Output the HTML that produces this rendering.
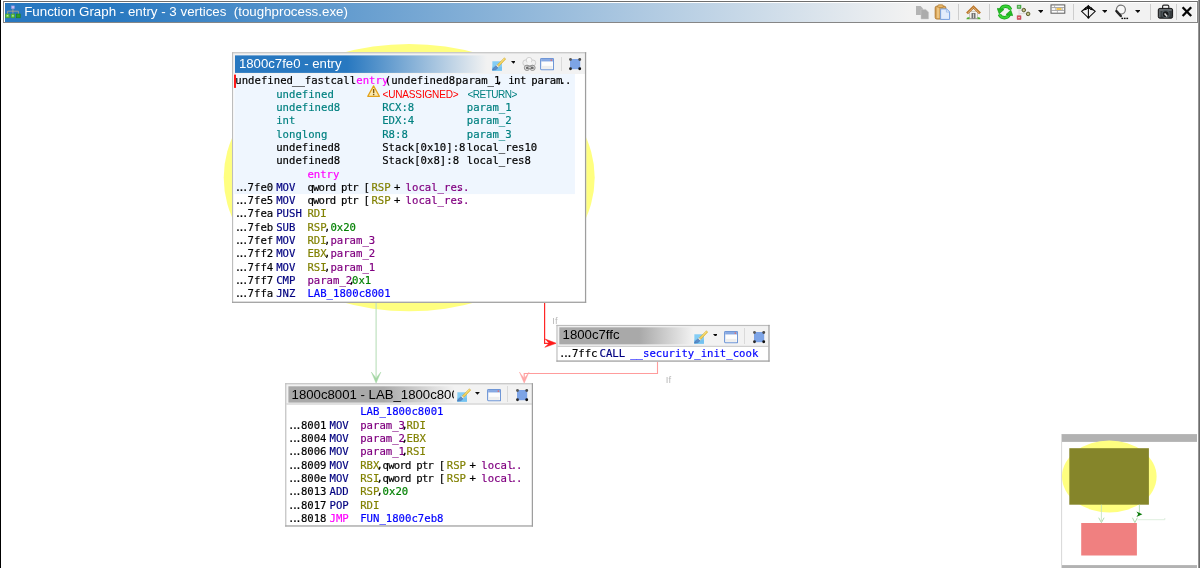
<!DOCTYPE html>
<html><head><meta charset="utf-8"><title>Function Graph</title>
<style>
html,body{margin:0;padding:0;background:#fff;}
body{will-change:transform;width:1200px;height:568px;position:relative;overflow:hidden;font-family:"Liberation Sans",sans-serif;}
.abs{position:absolute;}
.m{position:absolute;font-family:"DejaVu Sans Mono","Liberation Mono",monospace;font-size:10.65px;line-height:13.36px;white-space:pre;-webkit-text-stroke:0.18px currentColor;}
.s{position:absolute;font-family:"Liberation Sans",sans-serif;font-size:10.05px;line-height:12px;white-space:pre;letter-spacing:-0.2px;}
.k{color:#000}.nv{color:#000080}.ol{color:#808000}.pu{color:#800080}.gr{color:#008000}
.bl{color:#0000ff}.tl{color:#008080}.mg{color:#ff00ff}.rd{color:#ff0000}
#titlebar{left:3px;top:1px;width:1193px;height:20px;border:1px solid #868686;border-top-color:#6e6e6e;background:#fff;}
#tbbg{left:1px;top:1px;width:1191px;height:19px;background:#f2f2f2;}
#titlegrad{left:1px;top:1px;width:905px;height:19px;background:linear-gradient(to right,#2878c0 0,#2878c0 105px,#f2f2f2 905px);}
#titletext{left:20.2px;top:0;height:20px;line-height:20px;font-size:13.33px;color:#fff;white-space:pre;}
.blk{position:absolute;background:#fff;box-sizing:border-box;border-style:solid;border-width:1.2px;border-color:#c6c6c6 #9a9a9a #9a9a9a #c6c6c6;}
.hdr{position:absolute;background:#f2f2f2;}
.htitle{position:absolute;font-size:13.2px;white-space:pre;overflow:hidden;}
.lbl{position:absolute;font-size:9.5px;color:#bababa;line-height:10px;}
</style></head>
<body>
<!-- window side borders -->
<div class="abs" style="left:0;top:0;width:1px;height:568px;background:#000"></div>
<div class="abs" style="left:1198px;top:0;width:1px;height:568px;background:#969696"></div>
<div class="abs" style="left:1199px;top:0;width:1px;height:568px;background:#6c6c6c"></div>

<!-- main title bar -->
<div id="titlebar" class="abs">
  <div id="tbbg" class="abs"></div>
  <div id="titlegrad" class="abs"></div>
  <div id="titletext" class="abs">Function Graph - entry - 3 vertices  (toughprocess.exe)</div>
</div>
<svg class="abs" style="left:915px;top:4px" width="16" height="16" viewBox="0 0 16 16">
<path d="M1 2 H5.6 L8 4.4 V11 H1 Z" fill="#b4b4b4"/><path d="M6 5.4 H10.8 L13.6 8.2 V15 H6 Z" fill="#ababab" stroke="#c9c9c9" stroke-width="0.5"/></svg><svg class="abs" style="left:934px;top:4px" width="17" height="16" viewBox="0 0 17 16">
<rect x="1.2" y="2.2" width="10.6" height="12.8" rx="1.6" fill="#dca85c" stroke="#b07a30" stroke-width="1"/>
<rect x="3.8" y="0.8" width="5.4" height="2.8" rx="1" fill="#e8b86a" stroke="#b07a30" stroke-width="0.7"/>
<path d="M6.6 4.9 H12.6 L15.6 7.9 V15.4 H6.6 Z" fill="#e2ecfb" stroke="#77a0e0" stroke-width="1"/>
<path d="M12.4 5.1 V8.1 H15.4" fill="none" stroke="#8fb2e8" stroke-width="0.7"/><rect x="3.2" y="3.6" width="1.6" height="10.6" fill="#f0cc8c"/></svg><div class="abs" style="left:958px;top:4px;width:1px;height:16px;background:#cdcdcd"></div><svg class="abs" style="left:965px;top:4px" width="17" height="16" viewBox="0 0 17 16">
<rect x="4.6" y="7.6" width="7.8" height="6.6" fill="#f4f2ee" stroke="#b4b0a8" stroke-width="0.6"/>
<rect x="6.9" y="9.3" width="3.2" height="5.0" fill="#7a7a7a" stroke="#555" stroke-width="0.5"/>
<rect x="8.1" y="9.7" width="0.8" height="4.4" fill="#ddd"/>
<path d="M2.0 9.4 L8.5 3.0 L15.0 9.4" fill="none" stroke="#b8742a" stroke-width="2.6"/>
<path d="M2.6 9.2 L8.5 3.4 L14.4 9.2" fill="none" stroke="#e8b878" stroke-width="0.9"/>
<path d="M1.4 15.2 Q1.6 13.2 3.2 13.2 L4.6 13.2 V15.2 Z M15.6 15.2 Q15.4 13.2 13.8 13.2 L12.4 13.2 V15.2 Z" fill="#52ae34"/>
<rect x="4.4" y="14.4" width="8.2" height="0.8" fill="#8c8c8c"/></svg><div class="abs" style="left:989px;top:4px;width:1px;height:16px;background:#cdcdcd"></div><svg class="abs" style="left:996.5px;top:4.3px" width="16" height="16" viewBox="0 0 16 16">
<path d="M13.6 5.6 A5.4 5.4 0 0 0 3.6 5.6" fill="none" stroke="#109c14" stroke-width="3.3"/>
<path d="M13.6 5.6 A5.4 5.4 0 0 0 3.6 5.6" fill="none" stroke="#38d236" stroke-width="2.0"/>
<path d="M0.3 4.4 L7.0 5.4 L2.2 9.8 Z" fill="#24be24" stroke="#109c14" stroke-width="0.7"/>
<path d="M2.4 10.4 A5.4 5.4 0 0 0 12.4 10.4" fill="none" stroke="#109c14" stroke-width="3.3"/>
<path d="M2.4 10.4 A5.4 5.4 0 0 0 12.4 10.4" fill="none" stroke="#38d236" stroke-width="2.0"/>
<path d="M15.7 11.6 L9.0 10.6 L13.8 6.2 Z" fill="#24be24" stroke="#109c14" stroke-width="0.7"/></svg><svg class="abs" style="left:1016px;top:4px" width="16" height="17" viewBox="0 0 16 17">
<path d="M3 4.6 V12 M3 6.2 H6 M3 9.6 H10" stroke="#dcdcdc" stroke-width="1" fill="none"/>
<rect x="1.1" y="1.1" width="3.9" height="3.5" fill="#50b050" stroke="#3a9a3a" stroke-width="0.5"/>
<rect x="2" y="2.4" width="2" height="0.9" fill="#c8ecc8"/>
<rect x="1.1" y="11.8" width="3.9" height="3.7" fill="#d45060" stroke="#c04050" stroke-width="0.5"/>
<rect x="2" y="13.2" width="2" height="0.9" fill="#f4c8cc"/>
<circle cx="7.8" cy="6.1" r="1.8" fill="#a8a868" stroke="#55552a" stroke-width="0.9"/>
<circle cx="12.1" cy="9.9" r="1.8" fill="#a8a868" stroke="#55552a" stroke-width="0.9"/>
<circle cx="7.8" cy="6.1" r="0.7" fill="#e8e8c0"/><circle cx="12.1" cy="9.9" r="0.7" fill="#e8e8c0"/></svg><svg class="abs" style="left:1037.70px;top:10.00px" width="5.6" height="3.1" viewBox="0 0 5.6 3.1"><path d="M0 0 H5.6 L2.8 3.1 Z" fill="#0c0c0c"/></svg><svg class="abs" style="left:1049.5px;top:4.4px" width="16" height="10" viewBox="0 0 16 10">
<rect x="1.0" y="0.9" width="13.8" height="8.3" fill="#fcfcfc" stroke="#5c5c5c" stroke-width="1"/>
<path d="M1.4 3.6 H14.4 M1.4 6.4 H14.4" stroke="#8e8e8e" stroke-width="0.8" fill="none"/>
<path d="M4.6 1.2 V3.6 M7.4 6.4 V9 M12.2 3.6 V6.4 M5.8 3.6 V6.4" stroke="#a4a4a4" stroke-width="0.8" fill="none"/>
<rect x="6.6" y="4.2" width="4.8" height="1.6" fill="#f0b828"/></svg><div class="abs" style="left:1073px;top:4px;width:1px;height:16px;background:#cdcdcd"></div><svg class="abs" style="left:1080px;top:4px" width="17" height="16" viewBox="0 0 17 16">
<path d="M8.4 1.8 L15.2 7.4 L8.4 13.8 L1.6 7.4 Z" fill="none" stroke="#0a0a0a" stroke-width="1.05"/>
<path d="M8.4 3 V13" stroke="#0a0a0a" stroke-width="1.1"/>
<path d="M6.1 4.9 L8.4 0.7 L10.7 4.9 Z" fill="#0a0a0a"/>
<path d="M2.9 6.6 L5.6 2.9 L7.0 5.8 Z M13.9 6.6 L11.2 2.9 L9.8 5.8 Z" fill="#0a0a0a"/>
<circle cx="8.4" cy="13.5" r="1.15" fill="#0a0a0a"/></svg><svg class="abs" style="left:1101.80px;top:10.20px" width="5.6" height="3.0" viewBox="0 0 5.6 3.0"><path d="M0 0 H5.6 L2.8 3.0 Z" fill="#0c0c0c"/></svg><svg class="abs" style="left:1114px;top:4px" width="16" height="16" viewBox="0 0 16 16">
<circle cx="6.9" cy="5.6" r="4.5" fill="#f7f7f7" stroke="#757575" stroke-width="1.2"/>
<path d="M2.9 7.6 L6.8 12.0" stroke="#262626" stroke-width="2.4" stroke-linecap="round"/>
<circle cx="2.2" cy="6.9" r="1.0" fill="#1a1a1a"/>
<rect x="7.4" y="13.7" width="1.7" height="1.4" fill="#0c0c0c"/><rect x="9.9" y="13.7" width="1.7" height="1.4" fill="#0c0c0c"/><rect x="12.4" y="13.7" width="1.7" height="1.4" fill="#0c0c0c"/></svg><svg class="abs" style="left:1134.60px;top:10.20px" width="5.6" height="3.0" viewBox="0 0 5.6 3.0"><path d="M0 0 H5.6 L2.8 3.0 Z" fill="#0c0c0c"/></svg><div class="abs" style="left:1150px;top:4px;width:1px;height:16px;background:#cdcdcd"></div><svg class="abs" style="left:1157px;top:4px" width="17" height="16" viewBox="0 0 17 16">
<rect x="5.6" y="1.2" width="6.2" height="4" rx="1.3" fill="#f2f2f2" stroke="#2a2a2a" stroke-width="1.2"/>
<rect x="1.3" y="4.4" width="14.3" height="9.8" rx="1.5" fill="#363b3e" stroke="#161616" stroke-width="1"/>
<rect x="2.2" y="5.2" width="12.4" height="1.6" fill="#70777b"/>
<rect x="2.2" y="6.8" width="1.2" height="6.4" fill="#6a7074"/>
<circle cx="8.7" cy="10.2" r="3.5" fill="#1a1c1e" stroke="#4e585d" stroke-width="1.2"/>
<path d="M7.6 9.6 L10.2 12.6" stroke="#d8d8d8" stroke-width="1.5"/></svg><div class="abs" style="left:1176px;top:4px;width:1px;height:16px;background:#cdcdcd"></div><svg class="abs" style="left:1181px;top:6px" width="12" height="12" viewBox="0 0 12 12">
<path d="M1.6 1.3 L10.2 10.0 M10.2 1.3 L1.6 10.0" stroke="#050505" stroke-width="2.3" stroke-linecap="butt"/></svg><svg class="abs" style="left:5px;top:4px" width="16" height="16" viewBox="0 0 16 16">
<rect x="6.4" y="1.9" width="3" height="2.8" fill="#c4bdf4" stroke="#9a94e2" stroke-width="0.5"/>
<path d="M7.9 4.8 V7 M2.6 10 V7.2 H13.4 V10 M7.9 7 V10" stroke="#b8a488" stroke-width="0.8" fill="none"/>
<rect x="0.7" y="10" width="3.8" height="3.8" fill="#62c444" stroke="#3c9c26" stroke-width="0.6"/>
<rect x="6" y="10" width="3.8" height="3.8" fill="#62c444" stroke="#3c9c26" stroke-width="0.6"/>
<rect x="11.4" y="10" width="3.8" height="3.8" fill="#2ea028" stroke="#1d7d1a" stroke-width="0.6"/>
<rect x="1.8" y="11.2" width="1.4" height="1.2" fill="#c8f0b8"/><rect x="7.2" y="11.2" width="1.4" height="1.2" fill="#c8f0b8"/></svg>

<!-- graph edges + ellipse -->
<svg class="abs" style="left:0;top:0" width="1200" height="568" viewBox="0 0 1200 568">
  <ellipse cx="409.2" cy="177.6" rx="185.5" ry="133.7" fill="#ffff80"/>
  <!-- green fallthrough edge -->
  <path d="M376.1 303 V377" stroke="#bfe1bf" stroke-width="1.2" fill="none"/>
  <path d="M371.3 372.0 L376.1 383.2 L380.9 372.0 L376.1 378.0 Z" fill="#a4d6a4" stroke="#a4d6a4" stroke-width="0.4"/>
  <!-- red edge -->
  <path d="M544.6 303 V343.3 H549" stroke="#ff2626" stroke-width="1.2" fill="none"/>
  <path d="M545.2 339.0 L556.3 343.3 L544.8 347.3 L549.2 343.3 Z" fill="#ff1a1a" stroke="#ff1a1a" stroke-width="0.5"/>
  <!-- pink edge -->
  <path d="M657.5 361.7 V373.5 H524.2 V378" stroke="#ff9c9c" stroke-width="1.1" fill="none"/>
  <path d="M519.4 372.0 L524.2 383.2 L529.0 372.2 L524.2 378.6 Z" fill="#ffa6a6" stroke="#ffa0a0" stroke-width="0.4"/>
</svg>
<div class="lbl" style="left:552.3px;top:315.5px">If</div>
<div class="lbl" style="left:665.8px;top:375.3px">If</div>

<svg class="abs" style="left:0;top:0" width="1200" height="568" viewBox="0 0 1200 568">
<defs><linearGradient id="hg1" gradientUnits="userSpaceOnUse" x1="347.00" y1="0" x2="487.00" y2="0"><stop offset="0" stop-color="#2878c0"/><stop offset="1" stop-color="#f2f2f2"/></linearGradient></defs>
<rect x="232.00" y="52.20" width="354.20" height="250.70" fill="#ffffff"/>
<rect x="233.15" y="53.35" width="351.90" height="20.65" fill="#f2f2f2"/>
<rect x="235.00" y="55.40" width="252.00" height="17.50" fill="url(#hg1)"/>
<rect x="232.00" y="52.20" width="354.20" height="1.15" fill="#bdbdbd"/>
<rect x="232.00" y="52.20" width="1.15" height="250.70" fill="#bdbdbd"/>
<rect x="232.00" y="301.65" width="354.20" height="1.25" fill="#9e9e9e"/>
<rect x="584.95" y="52.20" width="1.25" height="250.70" fill="#9e9e9e"/>
</svg>
<div class="htitle" style="left:238.90px;top:56px;width:200.00px;height:16px;line-height:15px;color:#fff">1800c7fe0 - entry</div>
<svg class="abs" style="left:491.60px;top:56.60px" width="14.22" height="14.22" viewBox="0 0 16 16">
<rect x="0.4" y="4.8" width="10.8" height="10.6" fill="#84cdf5"/>
<rect x="0.4" y="11" width="10.8" height="4.4" fill="#74c2f0"/>
<path d="M14.0 0.9 L15.4 2.4 L7.6 10.6 L5.8 8.9 Z" fill="#f0cf5a" stroke="#d4a82c" stroke-width="0.6"/>
<path d="M13.4 1.9 L14.4 1.6 L7.4 9.0 Z" fill="#fdf0a8"/>
<path d="M5.6 8.8 L7.8 10.9 L6.6 12.0 L4.6 10.0 Z" fill="#ecebe0" stroke="#bdb8a0" stroke-width="0.4"/>
<path d="M4.4 10.0 L6.6 12.2 L4.4 14.2 L0.6 14.8 L0.9 13.2 Z" fill="#5c8cc8" stroke="#3f6eae" stroke-width="0.6"/>
</svg><svg class="abs" style="left:510.60px;top:61.40px" width="4.9" height="2.8" viewBox="0 0 4.9 2.8"><path d="M0 0 H4.9 L2.45 2.8 Z" fill="#0c0c0c"/></svg><svg class="abs" style="left:521.60px;top:56.60px" width="15.11" height="15.11" viewBox="0 0 17 17">
<circle cx="4.2" cy="6.6" r="3.3" fill="#f0f0f0" stroke="#c4c4c4" stroke-width="0.9"/>
<circle cx="12.2" cy="6.6" r="3.3" fill="#f0f0f0" stroke="#c4c4c4" stroke-width="0.9"/>
<circle cx="8.0" cy="3.6" r="3.2" fill="#f8f8f8" stroke="#c8c8c8" stroke-width="0.9"/>
<circle cx="8.2" cy="7.2" r="2.6" fill="#f4f4f4"/>
<circle cx="5.6" cy="12.2" r="3.0" fill="#dcdcdc" stroke="#8a8a8a" stroke-width="1.0"/>
<circle cx="11.8" cy="12.2" r="3.0" fill="#dcdcdc" stroke="#8a8a8a" stroke-width="1.0"/>
<rect x="4.6" y="11.2" width="8.4" height="2.2" fill="#6a6a6a"/>
<rect x="7.2" y="11.5" width="2.8" height="1.2" fill="#f4f4f4"/>
<rect x="5.2" y="9.4" width="7" height="1.4" fill="#9a9a9a"/>
</svg><svg class="abs" style="left:539.90px;top:56.60px" width="14.22" height="14.22" viewBox="0 0 16 16">
<rect x="0.7" y="1.7" width="14.6" height="12.6" rx="1" fill="#fdfdfd" stroke="#6f96d6" stroke-width="1.3"/>
<rect x="1.3" y="2.3" width="13.4" height="2.7" fill="#86a8e2"/>
<rect x="12.0" y="2.7" width="1.4" height="1.7" fill="#e66a6a"/>
<rect x="2" y="10" width="12" height="3.4" fill="#eeeeee"/>
</svg><div class="abs" style="left:561px;top:56.6px;width:1px;height:14px;background:#dadada"></div><svg class="abs" style="left:568.00px;top:56.70px" width="14.22" height="14.22" viewBox="0 0 16 16">
<rect x="2.7" y="2.7" width="10.6" height="10.6" fill="#7da4e6" stroke="#6a95e4" stroke-width="0.8"/>
<circle cx="2.8" cy="2.8" r="1.6" fill="#5a5a5a"/><circle cx="13.2" cy="2.8" r="1.6" fill="#4a4a4a"/>
<circle cx="2.8" cy="13.2" r="1.6" fill="#2a2a2a"/><circle cx="13.2" cy="13.2" r="1.6" fill="#111"/>
</svg><svg class="abs" style="left:0;top:0" width="1200" height="568" viewBox="0 0 1200 568"><rect x="234.4" y="74.0" width="340.5" height="120.1" fill="#eff6fe"/><rect x="234.1" y="74.6" width="1.8" height="13.3" fill="#ff0000"/></svg>
<svg class="abs" style="left:366.9px;top:85.4px" width="13.2" height="12.3" viewBox="0 0 14 13">
<path d="M7 0.9 L13.2 12 H0.8 Z" fill="#fbe9b0" stroke="#e3a21a" stroke-width="1.3" stroke-linejoin="round"/>
<rect x="6.3" y="4.2" width="1.5" height="4.3" fill="#7a5a10"/><rect x="6.3" y="9.3" width="1.5" height="1.5" fill="#7a5a10"/></svg>
<svg class="abs" style="left:0;top:0" width="1200" height="568" viewBox="0 0 1200 568">
<defs><linearGradient id="hg2" gradientUnits="userSpaceOnUse" x1="639.30" y1="0" x2="693.30" y2="0"><stop offset="0" stop-color="#a9a9a9"/><stop offset="1" stop-color="#f2f2f2"/></linearGradient></defs>
<rect x="556.40" y="324.90" width="213.20" height="36.80" fill="#ffffff"/>
<rect x="557.55" y="326.05" width="210.90" height="19.75" fill="#f2f2f2"/>
<rect x="559.30" y="327.30" width="134.00" height="17.10" fill="url(#hg2)"/>
<rect x="557.55" y="345.80" width="210.90" height="1.0" fill="#c4c4c4"/>
<rect x="556.40" y="324.90" width="213.20" height="1.15" fill="#bdbdbd"/>
<rect x="556.40" y="324.90" width="1.15" height="36.80" fill="#bdbdbd"/>
<rect x="556.40" y="360.45" width="213.20" height="1.25" fill="#9e9e9e"/>
<rect x="768.35" y="324.90" width="1.25" height="36.80" fill="#9e9e9e"/>
</svg>
<div class="htitle" style="left:562.60px;top:327px;width:120.00px;height:16px;line-height:15px;color:#000">1800c7ffc</div>
<svg class="abs" style="left:693.80px;top:329.70px" width="14.22" height="14.22" viewBox="0 0 16 16">
<rect x="0.4" y="4.8" width="10.8" height="10.6" fill="#84cdf5"/>
<rect x="0.4" y="11" width="10.8" height="4.4" fill="#74c2f0"/>
<path d="M14.0 0.9 L15.4 2.4 L7.6 10.6 L5.8 8.9 Z" fill="#f0cf5a" stroke="#d4a82c" stroke-width="0.6"/>
<path d="M13.4 1.9 L14.4 1.6 L7.4 9.0 Z" fill="#fdf0a8"/>
<path d="M5.6 8.8 L7.8 10.9 L6.6 12.0 L4.6 10.0 Z" fill="#ecebe0" stroke="#bdb8a0" stroke-width="0.4"/>
<path d="M4.4 10.0 L6.6 12.2 L4.4 14.2 L0.6 14.8 L0.9 13.2 Z" fill="#5c8cc8" stroke="#3f6eae" stroke-width="0.6"/>
</svg><svg class="abs" style="left:712.50px;top:333.60px" width="4.9" height="2.8" viewBox="0 0 4.9 2.8"><path d="M0 0 H4.9 L2.45 2.8 Z" fill="#0c0c0c"/></svg><svg class="abs" style="left:723.90px;top:329.70px" width="14.22" height="14.22" viewBox="0 0 16 16">
<rect x="0.7" y="1.7" width="14.6" height="12.6" rx="1" fill="#fdfdfd" stroke="#6f96d6" stroke-width="1.3"/>
<rect x="1.3" y="2.3" width="13.4" height="2.7" fill="#86a8e2"/>
<rect x="12.0" y="2.7" width="1.4" height="1.7" fill="#e66a6a"/>
<rect x="2" y="10" width="12" height="3.4" fill="#eeeeee"/>
</svg><div class="abs" style="left:744.3px;top:328.4px;width:1px;height:15.4px;background:#dadada"></div><svg class="abs" style="left:751.70px;top:329.80px" width="14.22" height="14.22" viewBox="0 0 16 16">
<rect x="2.7" y="2.7" width="10.6" height="10.6" fill="#7da4e6" stroke="#6a95e4" stroke-width="0.8"/>
<circle cx="2.8" cy="2.8" r="1.6" fill="#5a5a5a"/><circle cx="13.2" cy="2.8" r="1.6" fill="#4a4a4a"/>
<circle cx="2.8" cy="13.2" r="1.6" fill="#2a2a2a"/><circle cx="13.2" cy="13.2" r="1.6" fill="#111"/>
</svg><svg class="abs" style="left:0;top:0" width="1200" height="568" viewBox="0 0 1200 568">
<defs><linearGradient id="hg3" gradientUnits="userSpaceOnUse" x1="383.40" y1="0" x2="454.40" y2="0"><stop offset="0" stop-color="#a9a9a9"/><stop offset="1" stop-color="#f2f2f2"/></linearGradient></defs>
<rect x="285.20" y="383.20" width="247.80" height="143.40" fill="#ffffff"/>
<rect x="286.35" y="384.35" width="245.50" height="19.05" fill="#f2f2f2"/>
<rect x="288.40" y="386.30" width="166.00" height="16.30" fill="url(#hg3)"/>
<rect x="286.35" y="403.50" width="245.50" height="1.0" fill="#c4c4c4"/>
<rect x="285.20" y="383.20" width="247.80" height="1.15" fill="#bdbdbd"/>
<rect x="285.20" y="383.20" width="1.15" height="143.40" fill="#bdbdbd"/>
<rect x="285.20" y="525.35" width="247.80" height="1.25" fill="#9e9e9e"/>
<rect x="531.75" y="383.20" width="1.25" height="143.40" fill="#9e9e9e"/>
</svg>
<div class="htitle" style="left:291.60px;top:387px;width:162.40px;height:16px;line-height:15px;color:#000">1800c8001 - LAB_1800c8001</div>
<svg class="abs" style="left:456.90px;top:388.00px" width="14.22" height="14.22" viewBox="0 0 16 16">
<rect x="0.4" y="4.8" width="10.8" height="10.6" fill="#84cdf5"/>
<rect x="0.4" y="11" width="10.8" height="4.4" fill="#74c2f0"/>
<path d="M14.0 0.9 L15.4 2.4 L7.6 10.6 L5.8 8.9 Z" fill="#f0cf5a" stroke="#d4a82c" stroke-width="0.6"/>
<path d="M13.4 1.9 L14.4 1.6 L7.4 9.0 Z" fill="#fdf0a8"/>
<path d="M5.6 8.8 L7.8 10.9 L6.6 12.0 L4.6 10.0 Z" fill="#ecebe0" stroke="#bdb8a0" stroke-width="0.4"/>
<path d="M4.4 10.0 L6.6 12.2 L4.4 14.2 L0.6 14.8 L0.9 13.2 Z" fill="#5c8cc8" stroke="#3f6eae" stroke-width="0.6"/>
</svg><svg class="abs" style="left:475.00px;top:392.30px" width="4.9" height="2.8" viewBox="0 0 4.9 2.8"><path d="M0 0 H4.9 L2.45 2.8 Z" fill="#0c0c0c"/></svg><svg class="abs" style="left:486.90px;top:388.00px" width="14.22" height="14.22" viewBox="0 0 16 16">
<rect x="0.7" y="1.7" width="14.6" height="12.6" rx="1" fill="#fdfdfd" stroke="#6f96d6" stroke-width="1.3"/>
<rect x="1.3" y="2.3" width="13.4" height="2.7" fill="#86a8e2"/>
<rect x="12.0" y="2.7" width="1.4" height="1.7" fill="#e66a6a"/>
<rect x="2" y="10" width="12" height="3.4" fill="#eeeeee"/>
</svg><div class="abs" style="left:507.0px;top:386.3px;width:1px;height:15.4px;background:#dadada"></div><svg class="abs" style="left:515.20px;top:388.10px" width="14.22" height="14.22" viewBox="0 0 16 16">
<rect x="2.7" y="2.7" width="10.6" height="10.6" fill="#7da4e6" stroke="#6a95e4" stroke-width="0.8"/>
<circle cx="2.8" cy="2.8" r="1.6" fill="#5a5a5a"/><circle cx="13.2" cy="2.8" r="1.6" fill="#4a4a4a"/>
<circle cx="2.8" cy="13.2" r="1.6" fill="#2a2a2a"/><circle cx="13.2" cy="13.2" r="1.6" fill="#111"/>
</svg>

<span class="m k" style="left:235.30px;top:74.00px;">undefined</span>
<span class="m k" style="left:292.00px;top:74.00px;">__fastcall</span>
<span class="m mg" style="left:356.30px;top:74.00px;">entry</span>
<span class="m k" style="left:384.80px;top:74.00px;">(</span>
<span class="m k" style="left:391.20px;top:74.00px;">undefined8</span>
<span class="m k" style="left:455.60px;top:74.00px;">param_1</span>
<span class="m k" style="left:496.20px;top:74.00px;">,</span>
<span class="m k" style="left:508.20px;top:74.00px;letter-spacing:-0.50px;">int</span>
<span class="m k" style="left:531.20px;top:74.00px;letter-spacing:-0.20px;">param</span>
<span class="m k" style="left:559.60px;top:74.00px;">.</span>
<span class="m k" style="left:565.00px;top:74.00px;">.</span>
<span class="m tl" style="left:276.20px;top:88.00px;">undefined</span>
<span class="s rd" style="left:382.6px;top:89px">&lt;UNASSIGNED&gt;</span>
<span class="s tl" style="left:467.4px;top:89px;letter-spacing:-0.5px">&lt;RETURN&gt;</span>
<span class="m tl" style="left:276.20px;top:101.00px;">undefined8</span>
<span class="m tl" style="left:382.20px;top:101.00px;">RCX:8</span>
<span class="m tl" style="left:466.80px;top:101.00px;">param_1</span>
<span class="m tl" style="left:276.20px;top:114.00px;">int</span>
<span class="m tl" style="left:382.20px;top:114.00px;">EDX:4</span>
<span class="m tl" style="left:466.80px;top:114.00px;">param_2</span>
<span class="m tl" style="left:276.20px;top:128.00px;">longlong</span>
<span class="m tl" style="left:382.20px;top:128.00px;">R8:8</span>
<span class="m tl" style="left:466.80px;top:128.00px;">param_3</span>
<span class="m k" style="left:276.20px;top:141.00px;">undefined8</span>
<span class="m k" style="left:382.20px;top:141.00px;">Stack[0x10]:8</span>
<span class="m k" style="left:466.80px;top:141.00px;">local_res10</span>
<span class="m k" style="left:276.20px;top:154.00px;">undefined8</span>
<span class="m k" style="left:382.20px;top:154.00px;">Stack[0x8]:8</span>
<span class="m k" style="left:466.80px;top:154.00px;">local_res8</span>
<span class="m mg" style="left:307.40px;top:168.00px;">entry</span>
<span class="m k" style="left:234.70px;top:181.00px;letter-spacing:-2.75px;">...</span>
<span class="m k" style="left:247.60px;top:181.00px;">7fe0</span>
<span class="m nv" style="left:276.20px;top:181.00px;">MOV</span>
<span class="m k" style="left:307.40px;top:181.00px;letter-spacing:-0.79px;">qword ptr [</span>
<span class="m ol" style="left:371.40px;top:181.00px;">RSP</span>
<span class="m k" style="left:393.90px;top:181.00px;">+</span>
<span class="m pu" style="left:405.60px;top:181.00px;">local_res</span>
<span class="m pu" style="left:456.60px;top:181.00px;">..</span>
<span class="m k" style="left:234.70px;top:194.00px;letter-spacing:-2.75px;">...</span>
<span class="m k" style="left:247.60px;top:194.00px;">7fe5</span>
<span class="m nv" style="left:276.20px;top:194.00px;">MOV</span>
<span class="m k" style="left:307.40px;top:194.00px;letter-spacing:-0.79px;">qword ptr [</span>
<span class="m ol" style="left:371.40px;top:194.00px;">RSP</span>
<span class="m k" style="left:393.90px;top:194.00px;">+</span>
<span class="m pu" style="left:405.60px;top:194.00px;">local_res</span>
<span class="m pu" style="left:456.60px;top:194.00px;">..</span>
<span class="m k" style="left:234.70px;top:207.00px;letter-spacing:-2.75px;">...</span>
<span class="m k" style="left:247.60px;top:207.00px;">7fea</span>
<span class="m nv" style="left:276.20px;top:207.00px;">PUSH</span>
<span class="m ol" style="left:307.40px;top:207.00px;">RDI</span>
<span class="m k" style="left:234.70px;top:221.00px;letter-spacing:-2.75px;">...</span>
<span class="m k" style="left:247.60px;top:221.00px;">7feb</span>
<span class="m nv" style="left:276.20px;top:221.00px;">SUB</span>
<span class="m ol" style="left:307.40px;top:221.00px;">RSP</span>
<span class="m k" style="left:324.10px;top:221.00px;">,</span>
<span class="m gr" style="left:330.40px;top:221.00px;">0x20</span>
<span class="m k" style="left:234.70px;top:234.00px;letter-spacing:-2.75px;">...</span>
<span class="m k" style="left:247.60px;top:234.00px;">7fef</span>
<span class="m nv" style="left:276.20px;top:234.00px;">MOV</span>
<span class="m ol" style="left:307.40px;top:234.00px;">RDI</span>
<span class="m k" style="left:324.10px;top:234.00px;">,</span>
<span class="m pu" style="left:330.40px;top:234.00px;">param_3</span>
<span class="m k" style="left:234.70px;top:247.00px;letter-spacing:-2.75px;">...</span>
<span class="m k" style="left:247.60px;top:247.00px;">7ff2</span>
<span class="m nv" style="left:276.20px;top:247.00px;">MOV</span>
<span class="m ol" style="left:307.40px;top:247.00px;">EBX</span>
<span class="m k" style="left:324.10px;top:247.00px;">,</span>
<span class="m pu" style="left:330.40px;top:247.00px;">param_2</span>
<span class="m k" style="left:234.70px;top:261.00px;letter-spacing:-2.75px;">...</span>
<span class="m k" style="left:247.60px;top:261.00px;">7ff4</span>
<span class="m nv" style="left:276.20px;top:261.00px;">MOV</span>
<span class="m ol" style="left:307.40px;top:261.00px;">RSI</span>
<span class="m k" style="left:324.10px;top:261.00px;">,</span>
<span class="m pu" style="left:330.40px;top:261.00px;">param_1</span>
<span class="m k" style="left:234.70px;top:274.00px;letter-spacing:-2.75px;">...</span>
<span class="m k" style="left:247.60px;top:274.00px;">7ff7</span>
<span class="m nv" style="left:276.20px;top:274.00px;">CMP</span>
<span class="m pu" style="left:307.40px;top:274.00px;">param_2</span>
<span class="m k" style="left:348.50px;top:274.00px;">,</span>
<span class="m gr" style="left:352.00px;top:274.00px;">0x1</span>
<span class="m k" style="left:234.70px;top:287.00px;letter-spacing:-2.75px;">...</span>
<span class="m k" style="left:247.60px;top:287.00px;">7ffa</span>
<span class="m nv" style="left:276.20px;top:287.00px;">JNZ</span>
<span class="m bl" style="left:307.40px;top:287.00px;">LAB_1800c8001</span>
<span class="m k" style="left:559.00px;top:347.00px;letter-spacing:-2.75px;">...</span>
<span class="m k" style="left:571.90px;top:347.00px;">7ffc</span>
<span class="m nv" style="left:599.50px;top:347.00px;">CALL</span>
<span class="m bl" style="left:630.20px;top:347.00px;">__security_init_cook</span>
<span class="m bl" style="left:360.20px;top:405.00px;">LAB_1800c8001</span>
<span class="m k" style="left:288.00px;top:419.00px;letter-spacing:-2.75px;">...</span>
<span class="m k" style="left:300.90px;top:419.00px;">8001</span>
<span class="m nv" style="left:329.50px;top:419.00px;">MOV</span>
<span class="m pu" style="left:360.20px;top:419.00px;">param_3</span>
<span class="m k" style="left:401.50px;top:419.00px;">,</span>
<span class="m ol" style="left:406.60px;top:419.00px;">RDI</span>
<span class="m k" style="left:288.00px;top:432.00px;letter-spacing:-2.75px;">...</span>
<span class="m k" style="left:300.90px;top:432.00px;">8004</span>
<span class="m nv" style="left:329.50px;top:432.00px;">MOV</span>
<span class="m pu" style="left:360.20px;top:432.00px;">param_2</span>
<span class="m k" style="left:401.50px;top:432.00px;">,</span>
<span class="m ol" style="left:406.60px;top:432.00px;">EBX</span>
<span class="m k" style="left:288.00px;top:445.00px;letter-spacing:-2.75px;">...</span>
<span class="m k" style="left:300.90px;top:445.00px;">8006</span>
<span class="m nv" style="left:329.50px;top:445.00px;">MOV</span>
<span class="m pu" style="left:360.20px;top:445.00px;">param_1</span>
<span class="m k" style="left:401.50px;top:445.00px;">,</span>
<span class="m ol" style="left:406.60px;top:445.00px;">RSI</span>
<span class="m k" style="left:288.00px;top:459.00px;letter-spacing:-2.75px;">...</span>
<span class="m k" style="left:300.90px;top:459.00px;">8009</span>
<span class="m nv" style="left:329.50px;top:459.00px;">MOV</span>
<span class="m ol" style="left:360.20px;top:459.00px;">RBX</span>
<span class="m k" style="left:376.50px;top:459.00px;">,</span>
<span class="m k" style="left:382.60px;top:459.00px;letter-spacing:-0.79px;">qword ptr [</span>
<span class="m ol" style="left:446.80px;top:459.00px;">RSP</span>
<span class="m k" style="left:469.50px;top:459.00px;">+</span>
<span class="m pu" style="left:481.30px;top:459.00px;">local</span>
<span class="m pu" style="left:510.80px;top:459.00px;">.</span>
<span class="m pu" style="left:515.90px;top:459.00px;">.</span>
<span class="m k" style="left:288.00px;top:472.00px;letter-spacing:-2.75px;">...</span>
<span class="m k" style="left:300.90px;top:472.00px;">800e</span>
<span class="m nv" style="left:329.50px;top:472.00px;">MOV</span>
<span class="m ol" style="left:360.20px;top:472.00px;">RSI</span>
<span class="m k" style="left:376.50px;top:472.00px;">,</span>
<span class="m k" style="left:382.60px;top:472.00px;letter-spacing:-0.79px;">qword ptr [</span>
<span class="m ol" style="left:446.80px;top:472.00px;">RSP</span>
<span class="m k" style="left:469.50px;top:472.00px;">+</span>
<span class="m pu" style="left:481.30px;top:472.00px;">local</span>
<span class="m pu" style="left:510.80px;top:472.00px;">.</span>
<span class="m pu" style="left:515.90px;top:472.00px;">.</span>
<span class="m k" style="left:288.00px;top:485.00px;letter-spacing:-2.75px;">...</span>
<span class="m k" style="left:300.90px;top:485.00px;">8013</span>
<span class="m nv" style="left:329.50px;top:485.00px;">ADD</span>
<span class="m ol" style="left:360.20px;top:485.00px;">RSP</span>
<span class="m k" style="left:376.50px;top:485.00px;">,</span>
<span class="m gr" style="left:382.60px;top:485.00px;">0x20</span>
<span class="m k" style="left:288.00px;top:499.00px;letter-spacing:-2.75px;">...</span>
<span class="m k" style="left:300.90px;top:499.00px;">8017</span>
<span class="m nv" style="left:329.50px;top:499.00px;">POP</span>
<span class="m ol" style="left:360.20px;top:499.00px;">RDI</span>
<span class="m k" style="left:288.00px;top:512.00px;letter-spacing:-2.75px;">...</span>
<span class="m k" style="left:300.90px;top:512.00px;">8018</span>
<span class="m mg" style="left:329.50px;top:512.00px;">JMP</span>
<span class="m bl" style="left:360.20px;top:512.00px;">FUN_1800c7eb8</span>

<svg class="abs" style="left:1058px;top:430px" width="142" height="138" viewBox="1058 430 142 138">
<rect x="1061.4" y="434" width="136" height="134" fill="#ffffff"/>
<rect x="1061.1" y="434" width="1" height="134" fill="#d8d8d8"/>
<rect x="1062" y="434.1" width="135" height="7.8" fill="#b2b2b2"/>
<rect x="1062" y="565.1" width="135" height="3" fill="#b2b2b2"/>
<ellipse cx="1109.3" cy="476.6" rx="47.3" ry="36.0" fill="#ffff80"/>
<rect x="1069.3" y="448.2" width="79.6" height="56.5" fill="#85852a"/>
<rect x="1081.2" y="523" width="55.7" height="32.5" fill="#f08080"/>
<path d="M1101.4 504.7 V521" stroke="#bfe0bf" stroke-width="0.8" fill="none"/>
<path d="M1098.7 517.7 L1101.4 522.6 L1104.1 517.7" stroke="#9ed09e" stroke-width="0.8" fill="none"/>
<path d="M1139.4 504.7 V513" stroke="#a8d4a8" stroke-width="0.8" fill="none"/>
<path d="M1136.4 511.4 L1142.4 514.2 L1136.4 517 L1138.2 514.2 Z" fill="#0a7a0a"/>
<path d="M1164.8 518 V519.7 H1137.4" stroke="#d5ead5" stroke-width="0.8" fill="none"/>
<path d="M1132.4 517.7 L1134.9 522.6 L1137.4 517.7" stroke="#9ed09e" stroke-width="0.8" fill="none"/>
</svg>
</body></html>
